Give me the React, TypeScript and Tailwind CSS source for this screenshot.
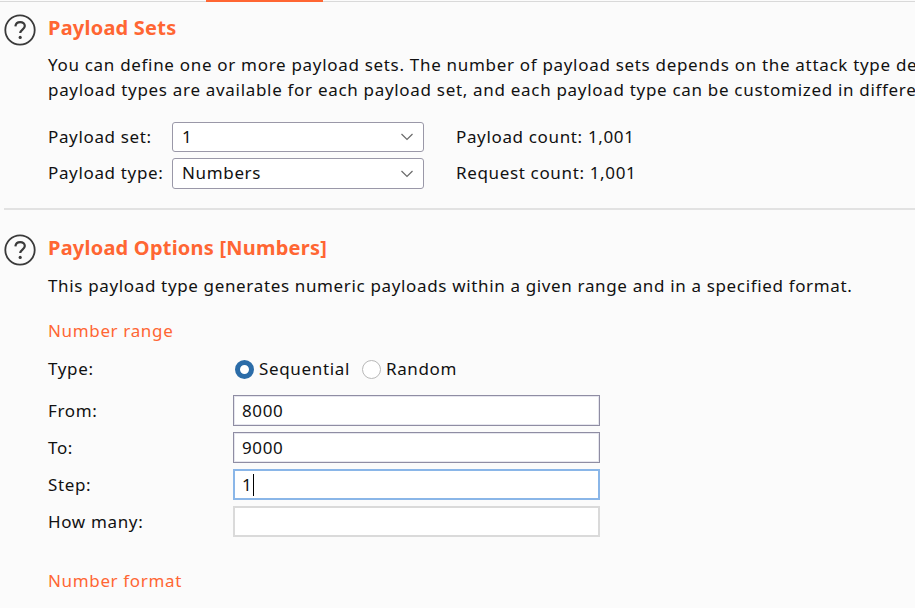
const font = "font-['Noto_Sans','Open_Sans',sans-serif]";

function HelpIcon() {
  return (
    <svg width="32" height="32" viewBox="0 0 32 32" className="shrink-0">
      <circle cx="16" cy="16" r="14.7" fill="none" stroke="#3a3a3a" strokeWidth="1.8" />
      <path d="M11.4 12.4c.3-2.8 2.3-4.3 4.8-4.300 2.6 0 4.600 1.600 4.600 3.900 0 3.500-4.600 3.600-4.600 7.100" fill="none" stroke="#3a3a3a" strokeWidth="2.200" />
      <circle cx="16.2" cy="23.4" r="1.6" fill="#3a3a3a" />
    </svg>
  );
}

function Heading({ children }: { children: string }) {
  return (
    <div className="flex h-8 ml-1">
      <HelpIcon />
      <h2 className="ml-[12px] -mt-[2px] text-[20px] font-bold text-[#ff6633] leading-8 tracking-[0.22px]">{children}</h2>
    </div>
  );
}

function Select({ value, height }: { value: string; height: string }) {
  return (
    <div className={`w-[252px] ${height} bg-white border border-[#9a98a8] rounded-[3px] flex items-center justify-between pl-[9px] pr-[9px]`}>
      <span className="pb-[2px]">{value}</span>
      <svg width="14" height="8" viewBox="0 0 14 8">
        <path d="M1.5 1l5.5 5.5L12.5 1" fill="none" stroke="#6a6a6a" strokeWidth="1.2" />
      </svg>
    </div>
  );
}

function Field({ label, value, state }: { label: string; value?: string; state?: "focus" | "off" }) {
  const border =
    state === "focus"
      ? "border-2 border-[#8ab6e8] pl-[7px]"
      : state === "off"
        ? "border-2 border-[#dadada] pl-[7px]"
        : "border border-[#8f8da3] shadow-[inset_0_0_0_1px_#e6e6ee] pl-[8px]";
  return (
    <div className="flex items-center h-[31px]">
      <span className="w-[185px]">{label}</span>
      <div className={`w-[367px] h-[31px] bg-white ${border} flex items-center`}>
        <span>{value}</span>
        {state === "focus" && <span className="w-px h-[22px] bg-black ml-px" />}
      </div>
    </div>
  );
}

export default function App() {
  return (
    <div className={`w-[915px] h-[608px] overflow-hidden bg-[#fbfbfb] text-[17px] leading-[25px] tracking-[0.65px] text-[#111] ${font}`}>
      <div className="relative h-[2px] border-b border-[#d9d9d9]">
        <div className="absolute left-[206px] top-0 w-[117px] h-[2px] bg-[#ff6633]" />
      </div>
      <div className="pt-[12px]">
        <Heading>Payload Sets</Heading>
        <div className="pl-[48px] mt-[6px] whitespace-nowrap tracking-[0.69px]">
          <p>You can define one or more payload sets. The number of payload sets depends on the attack type defined in the Positions tab.</p>
          <p>payload types are available for each payload set, and each payload type can be customized in different ways.</p>
        </div>
        <div className="pl-[48px] mt-[20px] flex flex-col gap-[6px]">
          <div className="flex items-center">
            <span className="w-[124px] pb-[2px]">Payload set:</span>
            <Select value="1" height="h-[30px]" />
            <span className="ml-[32px] pb-[2px]">Payload count: 1,001</span>
          </div>
          <div className="flex items-center">
            <span className="w-[124px] pb-[2px]">Payload type:</span>
            <Select value="Numbers" height="h-[31px]" />
            <span className="ml-[32px] pb-[2px]">Request count: 1,001</span>
          </div>
        </div>
        <div className="h-[2px] bg-[#e2e2e2] ml-[4px] mt-[19px]" />
      </div>
      <div className="pt-[24px]">
        <Heading>Payload Options [Numbers]</Heading>
        <p className="pl-[48px] mt-[7px] whitespace-nowrap">
          This payload type generates numeric payloads within a given range and in a specified format.
        </p>
        <div className="pl-[48px]">
          <h3 className="mt-[20px] text-[#ff6633]">Number range</h3>
          <div className="flex items-center h-[24px] mt-[13px]">
            <span className="w-[187px]">Type:</span>
            <span className="w-[19px] h-[19px] mt-[3px] rounded-full border-[5px] border-[#2b6ca8] bg-white" />
            <span className="ml-[5px]">Sequential</span>
            <span className="ml-[12px] w-[19px] h-[19px] mt-[3px] rounded-full border border-[#b8b8b8] bg-white" />
            <span className="ml-[5px]">Random</span>
          </div>
          <div className="mt-[15px] flex flex-col gap-[6px]">
            <Field label="From:" value="8000" />
            <Field label="To:" value="9000" />
            <Field label="Step:" value="1" state="focus" />
            <Field label="How many:" state="off" />
          </div>
          <h3 className="mt-[31px] text-[#ff6633]">Number format</h3>
        </div>
      </div>
    </div>
  );
}
